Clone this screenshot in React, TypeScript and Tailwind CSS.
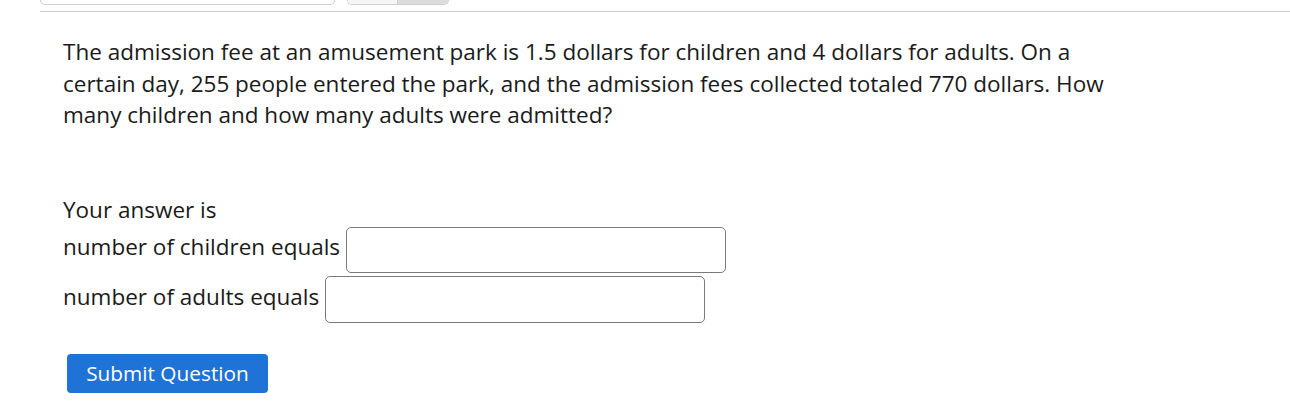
export default function App() {
  return (
    <div className="w-[1290px] h-[417px] overflow-hidden bg-white text-[#1a1a1a]" style={{ fontFamily: '"Open Sans", sans-serif' }}>
      <div className="pl-[40px]">
        <div className="flex h-[5px]">
          <div className="w-[295px] h-[5px] border border-t-0 border-[#cfcfcf] rounded-b-[6px]" />
          <div className="ml-[12px] w-[102px] h-[5px] flex border border-t-0 border-[#cfcfcf] rounded-b-[6px] overflow-hidden">
            <div className="w-[50px] bg-[#f6f6f6] border-r border-[#cfcfcf]" />
            <div className="flex-1 bg-[#dcdcdc]" />
          </div>
        </div>
        <div className="mt-[6px] border-t border-[#cccccc]" />
        <div className="pl-[23px] pt-[24px]">
          <p className="w-[1060px] text-[22.5px] leading-[31.5px]">
            The admission fee at an amusement park is 1.5 dollars for children and 4 dollars for adults. On a certain day, 255 people entered the park, and the admission fees collected totaled 770 dollars. How many children and how many adults were admitted?
          </p>
          <div className="mt-[63px] text-[22.5px]">
            <div className="leading-[31.5px]">Your answer is</div>
            <div className="flex items-center mt-[2px]">
              <span className="leading-[31.5px] pb-[6px]">number of children equals</span>
              <input type="text" className="ml-[6px] w-[380px] h-[46px] border border-[#7a7a7a] rounded-[5px] outline-none" />
            </div>
            <div className="flex items-center mt-[3px]">
              <span className="leading-[31.5px] pb-[6px]">number of adults equals</span>
              <input type="text" className="ml-[6px] w-[380px] h-[47px] border border-[#7a7a7a] rounded-[5px] outline-none" />
            </div>
            <button className="mt-[31px] ml-[4px] w-[201px] h-[39px] bg-[#1f72d6] text-white text-[20.8px] rounded-[4px]">
              Submit Question
            </button>
          </div>
        </div>
      </div>
    </div>
  );
}
